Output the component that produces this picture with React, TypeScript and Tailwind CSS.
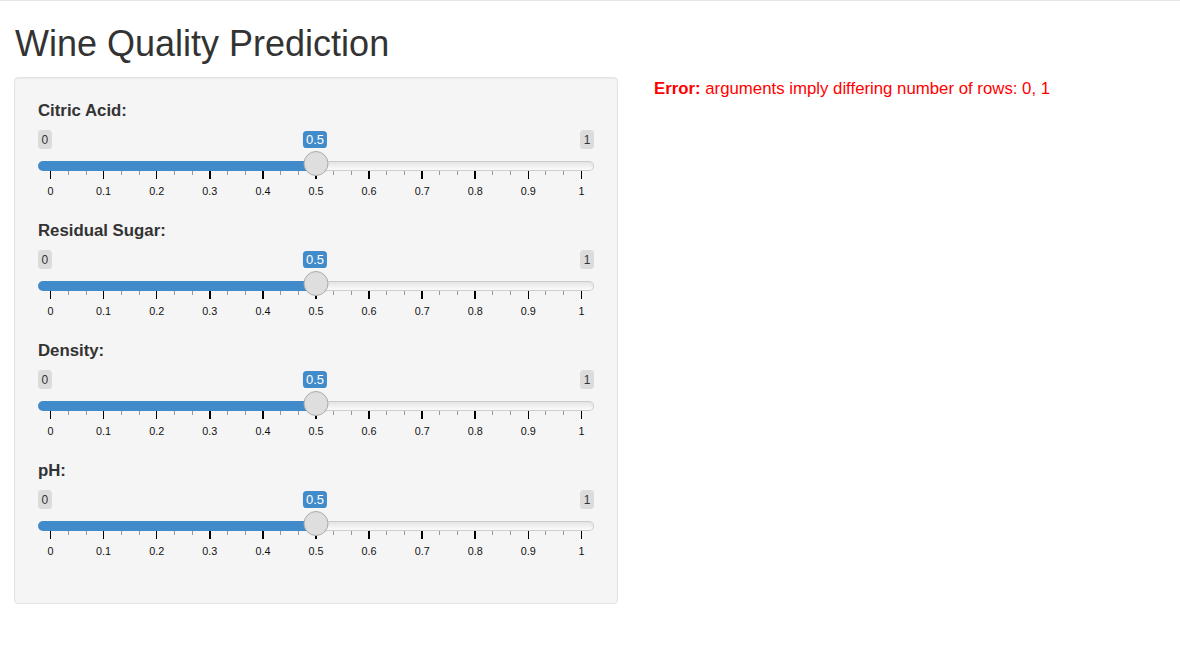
import React from "react";

const sliders = [
  { label: "Citric Acid:", value: 0.5 },
  { label: "Residual Sugar:", value: 0.5 },
  { label: "Density:", value: 0.5 },
  { label: "pH:", value: 0.5 },
];

// track is 556px wide, handle 25px, so the grid runs from 12.5 to 543.5
const HALF = 12.5;
const GRID = 556 - HALF * 2;

const majors = Array.from({ length: 11 }, (_, i) => i / 10);

function fmt(v: number) {
  if (v === 0) return "0";
  if (v === 1) return "1";
  return v.toFixed(1);
}

function Slider({ label, value }: { label: string; value: number }) {
  const pos = HALF + value * GRID;
  return (
    <div className="h-[120px]">
      <label className="block text-[16.8px] font-bold leading-[24px] text-[#333]">{label}</label>
      <div className="flex h-[96px] w-[556px] flex-col">
        {/* min / max labels, value bubble over them */}
        <div className="relative mt-[7px] flex h-[19px] justify-between">
          <span className="rounded-[3.6px] bg-[#dcdcdc] px-[3.6px] pb-px pt-[2px] text-[12px] leading-[16px] text-[#333]">0</span>
          <span className="rounded-[3.6px] bg-[#dcdcdc] px-[3.6px] pb-px pt-[2px] text-[12px] leading-[16px] text-[#333]">1</span>
          <span
            className="absolute top-px -translate-x-1/2 rounded-[3.6px] bg-[#428bca] px-[3px] py-px text-[13px] leading-[15px] text-white"
            style={{ left: pos - 1 }}
          >
            {fmt(value)}
          </span>
        </div>

        {/* track */}
        <div className="relative mt-[12px] flex h-[9.6px]">
          <div className="h-full rounded-l-full bg-[#428bca]" style={{ width: pos }} />
          <div className="h-full flex-1 rounded-r-full border border-l-0 border-[#cccccc] bg-gradient-to-b from-[#e4e4e4] to-[#fbfbfb]" />
          <span
            className="absolute -top-[10px] h-[25px] w-[25px] -translate-x-1/2 rounded-full border border-[#ababab] bg-[#dedede]"
            style={{ left: pos }}
          />
        </div>

        {/* grid */}
        <div className="flex px-[12.5px]">
          {majors.map((m, i) => (
            <React.Fragment key={m}>
              {i > 0 && (
                <div className="flex h-[4.8px] flex-1 justify-evenly">
                  <span className="h-full w-px bg-[#999]" />
                  <span className="h-full w-px bg-[#999]" />
                </div>
              )}
              <div className="flex w-0 flex-col items-center">
                <span className="h-[8px] w-[1.6px] shrink-0 bg-black" />
                <span className="mt-[6.5px] whitespace-nowrap text-[10.8px] leading-[13px] text-[#111]">{fmt(m)}</span>
              </div>
            </React.Fragment>
          ))}
        </div>
      </div>
    </div>
  );
}

export default function App() {
  return (
    <div className="min-h-screen border-t border-[#e5e5e5] bg-white px-[14px] font-['Liberation_Sans',Arial,sans-serif]">
      <h1 className="ml-px mt-[23px] text-[36px] font-normal leading-[40px] text-[#333]">Wine Quality Prediction</h1>
      <div className="mt-[13px] flex items-start gap-[36px]">
        <div className="w-[604px] rounded-[4px] border border-[#e3e3e3] bg-[#f5f5f5] px-[23px] pb-[24px] pt-[21px] shadow-[inset_0_1px_1px_rgba(0,0,0,0.05)]">
          {sliders.map((s) => (
            <Slider key={s.label} label={s.label} value={s.value} />
          ))}
        </div>
        <div className="text-[16.8px] leading-[24px] text-[#ff0000]">
          <b>Error:</b> arguments imply differing number of rows: 0, 1
        </div>
      </div>
    </div>
  );
}
